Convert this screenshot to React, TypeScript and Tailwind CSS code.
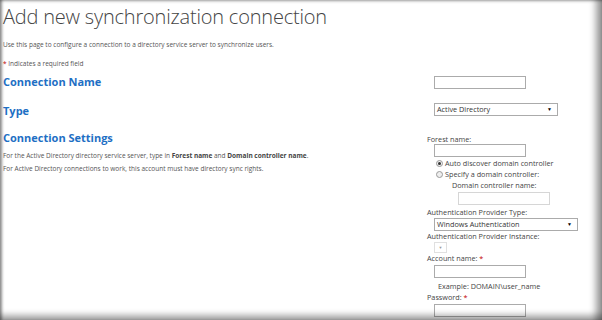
import React from "react";

const font = { fontFamily: '"Open Sans", "Noto Sans", Arial, sans-serif' };

function Input({ light = false, w = "w-[92px]", mt = "" }: { light?: boolean; w?: string; mt?: string }) {
  return (
    <div
      className={`${w} h-[13px] ml-[7px] ${mt} bg-white border ${light ? "border-[#d6d6d6]" : "border-[#ababab]"}`}
    />
  );
}

function Radio({ checked, label }: { checked: boolean; label: string }) {
  return (
    <div className="flex items-center h-[11px] ml-[9px] gap-[2px]">
      <span className="w-[7px] h-[7px] rounded-full border border-[#9a9a9a] bg-[#eeeeee] flex items-center justify-center">
        {checked && <span className="w-[3px] h-[3px] rounded-full bg-[#333]" />}
      </span>
      <span>{label}</span>
    </div>
  );
}

function Select({ label, w, mt }: { label: string; w: string; mt: string }) {
  return (
    <div
      className={`${w} h-[13px] ml-[7px] ${mt} border border-[#ababab] bg-white flex items-center justify-between px-[2px] text-[7.25px] text-[#333]`}
    >
      <span>{label}</span>
      <span className="text-[5px] mr-[3px] text-black">▼</span>
    </div>
  );
}

export default function App() {
  return (
    <div className="relative w-[602px] h-[320px] bg-white overflow-hidden text-[#444]" style={font}>
      <div className="pl-[3px]">
        <h1 className="text-[20px] font-light leading-[26px] pt-[4px] text-[#444] tracking-[-0.2px]">
          Add new synchronization connection
        </h1>
        <p className="text-[6.5px] leading-[10px] mt-[10px] text-[#555]">
          Use this page to configure a connection to a directory service server to synchronize users.
        </p>
        <p className="text-[6.5px] leading-[10px] mt-[9px] text-[#555]">
          <span className="text-[#bf0000]">*</span> Indicates a required field
        </p>
      </div>
      <div className="flex pt-[4px]">
        <div className="w-[427px] pl-[3px]">
          <h2 className="text-[11px] font-bold text-[#1e6fc4] leading-[14px] mt-[2px]">Connection Name</h2>
          <h2 className="text-[11px] font-bold text-[#1e6fc4] leading-[14px] mt-[15px]">Type</h2>
          <h2 className="text-[11px] font-bold text-[#1e6fc4] leading-[14px] mt-[13px]">Connection Settings</h2>
          <p className="text-[6.5px] leading-[10px] mt-[6px] text-[#555]">
            For the Active Directory directory service server, type in <b className="text-[#444]">Forest name</b> and{" "}
            <b className="text-[#444]">Domain controller name</b>.
          </p>
          <p className="text-[6.5px] leading-[10px] mt-[3px] text-[#555]">
            For Active Directory connections to work, this account must have directory sync rights.
          </p>
        </div>
        <div className="flex-1 text-[7.25px] text-[#444]">
          <Input mt="mt-[3px]" w="w-[92px]" />
          <Select label="Active Directory" w="w-[124px]" mt="mt-[14px]" />
          <div className="leading-[10px] mt-[18px]">Forest name:</div>
          <Input w="w-[92px]" />
          <div className="mt-[1px]">
            <Radio checked label="Auto discover domain controller" />
            <Radio checked={false} label="Specify a domain controller:" />
          </div>
          <div className="leading-[10px] ml-[25px]">Domain controller name:</div>
          <div className="ml-[24px]">
            <Input light w="w-[92px]" mt="mt-[2px]" />
          </div>
          <div className="leading-[10px] mt-[2px]">Authentication Provider Type:</div>
          <Select label="Windows Authentication" w="w-[144px]" mt="mt-[1px]" />
          <div className="leading-[10px]">Authentication Provider Instance:</div>
          <div className="w-[13px] h-[11px] ml-[7px] mt-[1px] border border-[#e0e0e0] flex items-center justify-center text-[4px] text-[#999]">
            ▼
          </div>
          <div className="leading-[10px]">
            Account name: <span className="text-[#bf0000]">*</span>
          </div>
          <Input w="w-[92px]" mt="mt-[2px]" />
          <div className="leading-[10px] mt-[3px] ml-[11px]">Example: DOMAIN\user_name</div>
          <div className="leading-[10px] mt-[1px]">
            Password: <span className="text-[#bf0000]">*</span>
          </div>
          <Input w="w-[92px]" mt="mt-[2px]" />
        </div>
      </div>
      <div className="absolute inset-0 pointer-events-none shadow-[inset_3px_0_3px_-1px_rgba(0,0,0,0.4),inset_0_2px_3px_-1px_rgba(0,0,0,0.3),inset_-10px_0_7px_-4px_rgba(0,0,0,0.4),inset_0_-8px_6px_-3px_rgba(0,0,0,0.35)]" />
    </div>
  );
}
